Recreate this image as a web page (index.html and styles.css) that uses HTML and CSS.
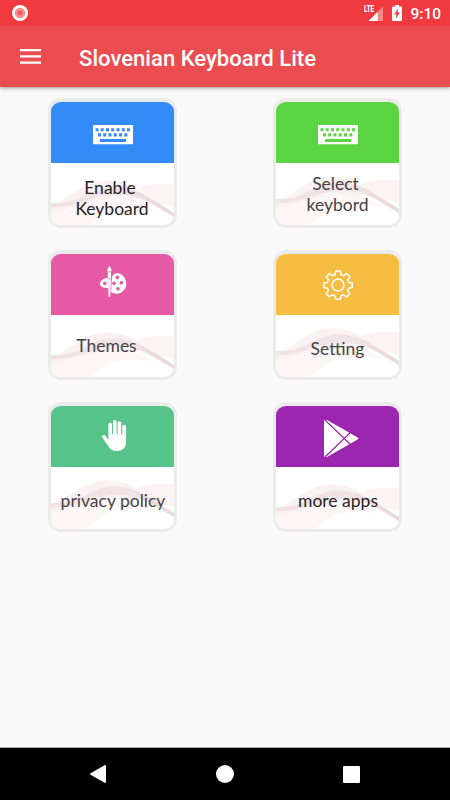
FILE: index.html
```html
<!DOCTYPE html>
<html lang="en">
<head>
<meta charset="utf-8">
<title>Slovenian Keyboard Lite</title>
<link rel="stylesheet" href="styles.css">
</head>
<body>
<svg class="defs" aria-hidden="true">
  <symbol id="keyboard" viewBox="0 0 40 20">
    <path fill="#fff" fill-rule="evenodd" d="M0 0h40v19.300H0zM2.500 3.200v3h3v-3zM7.700 3.200v3h3v-3zM13 3.200v3h3v-3zM18.200 3.200v3h3v-3zM23.500 3.200v3h3v-3zM28.800 3.200v3h3v-3zM34 3.200v3h3v-3zM5 8.300v3.100h3v-3.100zM10.200 8.300v3.100h3v-3.100zM15.500 8.300v3.100h3v-3.100zM20.700 8.300v3.100h3v-3.100zM26 8.300v3.100h3v-3.100zM31.300 8.300v3.100h3v-3.100zM7 14v3h26v-3z"/>
  </symbol>
  <symbol id="wave" viewBox="0 0 123 62" preserveAspectRatio="none">
    <path fill="#fdf6f7" d="M0 43C25 43 40 35 60 31c18 0 28 3 44 12-20-4-36-3-50 4-13 9-20 17-35 19H0z"/>
    <path fill="#faf1f2" d="M0 37C16 35 28 17 49 14c18-2 32 4 46 13L82 34C50 26 32 42 0 44z"/>
    <path fill="#fbf4f5" d="M73 26c18-8 32-11 50-9v22c-16-1-28-6-50-13z"/>
    <path fill="#f1e2e5" d="M0 36c20 1 30-6 43-12 28-13 48 3 80 22v4C100 37 90 29 72 28 42 26 26 42 0 40z"/>
    <path fill="#e9d8dc" d="M76 21c17 5 31 15 47 25v4C105 39 93 29 76 21z" opacity=".8"/>
  </symbol>
</svg>

<header>
  <div class="status-bar">
    <svg class="record" viewBox="0 0 16 16"><circle cx="8" cy="8" r="8" fill="#fff"/><circle cx="8" cy="8" r="5.300" fill="#fb8f93"/><circle cx="8" cy="8" r="2.500" fill="#f35b60"/></svg>
    <div class="signal">
      <span class="lte">LTE</span>
      <svg viewBox="0 0 16 16"><path fill="#f7898c" d="M16 0v16H0z"/><path fill="#fff" d="M10 6v10H0z"/></svg>
    </div>
    <svg class="battery" viewBox="0 0 10 16"><path fill="#fff" d="M3 0h4v1.500h2q1 0 1 1V15q0 1-1 1H1q-1 0-1-1V2.500q0-1 1-1h2z"/><path fill="#ef3a40" d="M6.200 3.500 2 9.500h2.500l-.7 4L8 7.500H5.600z"/></svg>
    <span class="clock">9:10</span>
  </div>
  <div class="app-bar">
    <svg class="menu" viewBox="0 0 21 15"><path fill="#fff" d="M0 0h21v2.300H0zM0 6.300h21v2.300H0zM0 12.500h21v2.300H0z"/></svg>
    <h1>Slovenian Keyboard Lite</h1>
  </div>
</header>

<main>
  <a class="card blue">
    <div class="top"><svg class="kbd"><use href="#keyboard"/></svg></div>
    <div class="label enable"><svg class="wave"><use href="#wave"/></svg><span><i>Enable</i><br>Keyboard</span></div>
  </a>
  <a class="card green">
    <div class="top"><svg class="kbd"><use href="#keyboard"/></svg></div>
    <div class="label select high"><svg class="wave"><use href="#wave"/></svg><span><i>Select</i><br>keybord</span></div>
  </a>
  <a class="card pink">
    <div class="top"><svg class="palette" viewBox="0 0 27 31">
      <path fill="#fff" fill-rule="evenodd" d="M12 11C13 7 18 6 22 9c5 4 6 12 1 16-4 4-9 3-12 1zM17.300 9.600a1.800 1.800 0 1 0 .01 0zM21.300 15a1.800 1.800 0 1 0 .01 0zM18 21a1.800 1.800 0 1 0 .01 0zM14 15.500a1.800 1.800 0 1 0 .01 0zM8 12C3 12 0 15 0 18c0 3 4 4 8 4zM4.800 15.500a1.800 1.800 0 1 0 .01 0z"/>
      <path fill="#fff" d="M9.400 0C7.500 2.500 7 3.500 7.500 5.500h3.800C11.800 3.500 11.200 2.500 9.400 0zM7.800 6.200h3.300v6.300H7.800zM8 13.200h2.900L10.200 31H8.600z"/></svg></div>
    <div class="label themes"><svg class="wave"><use href="#wave"/></svg><span>Themes</span></div>
  </a>
  <a class="card amber">
    <div class="top"><svg class="gear" viewBox="0 0 30 30">
      <g fill="none" stroke="#fff" stroke-width="1.500" stroke-linejoin="round"><circle cx="15" cy="15" r="6"/>
      <path d="M12.600 1h4.800l.6 3.700 2.500 1L23.600 3.500l3.300 3.300L24.700 10l1 2.400 3.500.6v4.600l-3.600.7-1 2.400 2.200 3.100-3.300 3.200-3.100-2.200-2.400 1-.6 3.400h-4.800l-.6-3.500-2.500-1-3.100 2.200-3.200-3.200 2.100-3.100-1-2.400-3.500-.7V13l3.600-.6 1-2.400-2.200-3.200 3.300-3.300 3.100 2.200 2.400-1z"/></g></svg></div>
    <div class="label setting high"><svg class="wave"><use href="#wave"/></svg><span>Setting</span></div>
  </a>
  <a class="card mint">
    <div class="top"><svg class="hand" viewBox="0 0 25 31"><path fill="#fff" d="M6.400 20V4.500q0-1.800 1.800-1.800T10 4.500V14h1V1.800Q11 0 12.800 0t1.800 1.800V14h1V3q0-1.800 1.800-1.800T19.200 3v11.500h1.100V6.500q0-1.800 1.900-1.800T24.100 6.500V22c0 6-4 9-9.600 9-4 0-6.300-1.500-8.300-5L.3 17.500c-.6-1-.2-2 .6-2.300 1-.4 2 0 2.700.8z"/></svg></div>
    <div class="label privacy high"><svg class="wave"><use href="#wave"/></svg><span>privacy policy</span></div>
  </a>
  <a class="card purple">
    <div class="top"><svg class="play" viewBox="0 0 35 38"><path fill="#fff" d="M1 0h2l22 12.500 9 5.200q1 .8 0 1.600L24 25 3 37H1q-1 0-1-1V1q0-1 1-1z"/><path stroke="#9b27b0" stroke-width="1.200" fill="none" d="M1 0l26 25M1 37l26-25"/></svg></div>
    <div class="label more"><svg class="wave"><use href="#wave"/></svg><span>more apps</span></div>
  </a>
</main>

<nav>
  <svg viewBox="0 0 16 18"><path fill="#fff" d="M15 0q1 0 1 1v16q0 1-1 1L.5 9.800q-1-.8 0-1.600z"/></svg>
  <svg viewBox="0 0 18 18"><circle cx="9" cy="9" r="9" fill="#fff"/></svg>
  <svg viewBox="0 0 17 17"><rect width="17" height="17" rx="1" fill="#fff"/></svg>
</nav>
</body>
</html>
```
FILE: styles.css
```css
* { box-sizing: border-box; }
body {
  margin: 0;
  width: 450px;
  height: 800px;
  display: flex;
  flex-direction: column;
  background: #fafafa;
  font-family: Roboto, sans-serif;
  overflow: hidden;
}
svg { display: block; flex: none; }
.defs { position: absolute; width: 0; height: 0; }

header { height: 87px; box-shadow: 0 1px 4px rgba(0, 0, 0, .4); color: #fff; }
.status-bar {
  height: 26px;
  display: flex;
  align-items: center;
  padding: 0 9px 0 12px;
  background: #f03a40;
}
.record { width: 16px; height: 16px; }
.signal { position: relative; margin-left: auto; padding: 1px 0 0 4px; }
.signal svg { width: 15.5px; height: 15.5px; }
.lte {
  position: absolute;
  left: 0;
  top: 0;
  font: 900 9.5px/8px Roboto, sans-serif;
  transform: scaleX(.65);
  transform-origin: left;
}
.battery { width: 10px; height: 16px; margin-left: 9px; }
.clock { font-size: 15.5px; font-weight: 500; line-height: 26px; margin-left: 8px; padding-top: 2px; }
.app-bar {
  height: 61px;
  display: flex;
  align-items: center;
  padding-left: 20px;
  background: #eb4c50;
}
.menu { width: 21px; height: 15px; }
h1 { margin: 2px 0 0 38px; font-size: 22.1px; font-weight: 500; line-height: 30px; white-space: nowrap; }

main {
  flex: 1;
  display: grid;
  grid-template-columns: 129px 129px;
  grid-auto-rows: 130px;
  gap: 22px 96px;
  padding: 11px 0 0 48px;
}
.card {
  display: flex;
  flex-direction: column;
  border: 3px solid #ebebeb;
  border-top-width: 4px;
  border-radius: 13px;
  overflow: hidden;
  background: #fff;
}
.top { flex: none; height: 61px; display: flex; justify-content: center; }
.blue .top { background: #338bf7; }
.green .top { background: #5bd642; }
.pink .top { background: #e659a5; }
.amber .top { background: #f6bd43; }
.mint .top { background: #56c489; }
.purple .top { background: #9b27b0; }
.kbd { width: 40px; height: 20px; margin-top: 23px; }
.palette { width: 27px; height: 31px; margin-top: 12px; margin-left: 2px; }
.gear { width: 30px; height: 30px; margin-top: 16px; }
.hand { width: 25px; height: 31px; margin-top: 14px; margin-left: 3px; }
.play { width: 35px; height: 38px; margin-top: 14px; margin-left: 7px; }

.label {
  height: 62px;
  display: grid;
  justify-content: center;
  overflow: hidden;
  font: 17.5px/21px Lato, sans-serif;
  text-align: center;
  white-space: nowrap;
  color: #444;
}
.label > * { grid-area: 1 / 1; }
.label span { position: relative; justify-self: center; }
.label i { font-style: normal; margin-right: 4px; }
.wave { width: 123px; height: 62px; }
.label:not(.high) .wave { margin-top: 4px; }
.enable { color: #1f2125; }
.enable span { margin: 14px 1px 0 0; }
.select span { margin-top: 10px; }
.themes span { margin: 20px 12px 0 0; }
.setting span { margin-top: 23px; }
.privacy span { margin: 23px 0 0 1px; }
.more { color: #252525; }
.more span { margin: 23px 0 0 1px; }

nav {
  height: 53px;
  border-top: 1px solid #aaa;
  background: #000;
  display: flex;
  align-items: center;
  justify-content: space-between;
  padding: 0 90px 0 89px;
}
nav svg { width: 18px; height: 18px; }
nav svg:last-child { width: 17px; height: 17px; }
```
